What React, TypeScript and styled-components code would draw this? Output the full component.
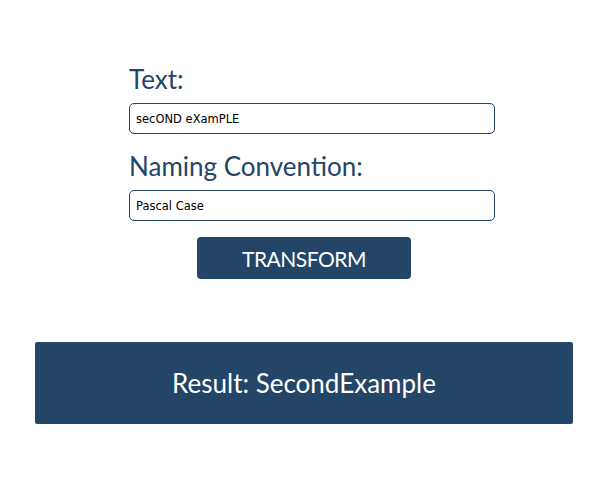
import React, { useState } from "react";
import styled, { createGlobalStyle } from "styled-components";

const GlobalStyle = createGlobalStyle`
  html, body {
    margin: 0;
    padding: 0;
    background: #ffffff;
  }
  body {
    font-family: Lato, "Liberation Sans", sans-serif;
  }
`;

const NAVY = "#234567";

const Page = styled.div`
  display: flex;
  flex-direction: column;
  padding-top: 64px;
`;

const Form = styled.form`
  display: flex;
  flex-direction: column;
  width: 366px;
  margin-left: 129px;
`;

const Label = styled.label<{ $first?: boolean }>`
  font-family: Lato, sans-serif;
  font-size: 26px;
  line-height: 30px;
  color: ${NAVY};
  margin-top: ${(p) => (p.$first ? 0 : 17)}px;
  margin-bottom: 9px;
`;

const Input = styled.input`
  box-sizing: border-box;
  width: 366px;
  height: 31px;
  border: 1px solid ${NAVY};
  border-radius: 5px;
  padding: 0 6px;
  font-family: "DejaVu Sans", Verdana, sans-serif;
  font-size: 11.5px;
  color: #000;
  background: #fff;
  outline: none;
`;

const Button = styled.button`
  box-sizing: border-box;
  width: 214px;
  height: 42px;
  margin-top: 16px;
  margin-left: 68px;
  border: none;
  border-radius: 4px;
  background: ${NAVY};
  color: #fff;
  font-family: Lato, sans-serif;
  font-size: 21px;
  letter-spacing: -0.5px;
  cursor: pointer;
  padding: 0;
`;

const Result = styled.div`
  box-sizing: border-box;
  width: 538px;
  height: 82px;
  margin-top: 63px;
  margin-left: 35px;
  border-radius: 2px;
  background: ${NAVY};
  color: #fff;
  font-family: Lato, sans-serif;
  font-size: 26px;
  display: flex;
  align-items: center;
  justify-content: center;
`;

export default function App() {
  const [text, setText] = useState("secOND eXamPLE");
  const [conv, setConv] = useState("Pascal Case");
  return (
    <Page>
      <GlobalStyle />
      <Form onSubmit={(e) => e.preventDefault()}>
        <Label $first htmlFor="text">Text:</Label>
        <Input id="text" value={text} onChange={(e) => setText(e.target.value)} />
        <Label htmlFor="conv">Naming Convention:</Label>
        <Input id="conv" value={conv} onChange={(e) => setConv(e.target.value)} />
        <Button type="submit">TRANSFORM</Button>
      </Form>
      <Result>Result: SecondExample</Result>
    </Page>
  );
}
